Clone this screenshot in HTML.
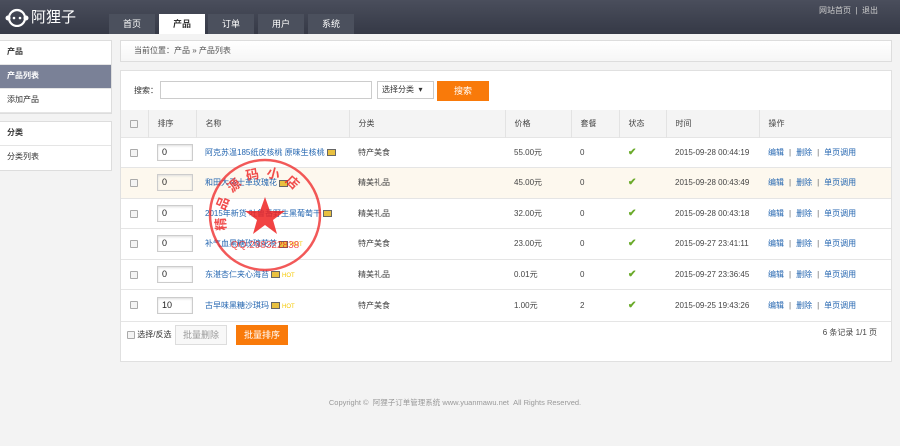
<!DOCTYPE html>
<html><head><meta charset="utf-8"><style>
*{margin:0;padding:0;box-sizing:border-box}
body{width:900px;height:446px;background:#f3f3f3;font-family:"Liberation Sans","Noto Sans CJK SC",sans-serif;font-size:8px;color:#333;position:relative;overflow:hidden}
.hd{position:absolute;left:0;top:0;width:900px;height:34px;background:linear-gradient(#4a4e5c,#353946)}
.logo{position:absolute;left:5px;top:6px;color:#fff;font-size:15px;display:flex;align-items:center;gap:2px}
.tab{position:absolute;top:14px;height:20px;width:46px;background:#4b505d;color:#fff;font-size:9px;text-align:center;line-height:21px}
.tab.on{background:#fff;color:#333;font-weight:bold}
.tr{position:absolute;right:22px;top:5px;color:#ccc;font-size:8px}
.side{position:absolute;left:0;top:40px;width:112px;background:#fff;border:1px solid #ddd;border-left:0}
.side div{height:24px;line-height:22px;padding-left:7px;border-bottom:1px solid #e5e5e5;font-size:8px}
.side .t{font-weight:bold}
.side .a{background:#7a8197;color:#fff;font-weight:bold}
.bc{position:absolute;left:120px;top:40px;width:772px;height:22px;background:linear-gradient(#fff,#f6f6f6);border:1px solid #ddd;line-height:20px;padding-left:13px;color:#555}
.box{position:absolute;left:120px;top:70px;width:772px;height:292px;background:#fff;border:1px solid #e0e0e0}
table{position:absolute;left:0;top:39px;width:770px;border-collapse:collapse}
th{background:#f4f4f4;height:27px;text-align:left;font-weight:normal;padding-left:9px;border-right:1px solid #e3e3e3;color:#444}
td{height:30.5px;border-top:1px solid #e5e5e5;padding-left:9px;color:#444}
tr.y td{background:#fdf8ee}
.cb{display:inline-block;width:8px;height:8px;border:1px solid #aaa;border-radius:1px;background:#f4f4f4;vertical-align:middle}
.in{display:inline-block;width:36px;height:17px;border:1px solid #ccc;padding-left:4px;line-height:15px;font-size:9px;color:#222;box-shadow:inset 0 1px 2px #ddd}
a{color:#2466b0;text-decoration:none}
.ic{display:inline-block;width:9px;height:7px;background:#e8c040;border:1px solid #666;vertical-align:middle;margin-left:2px}
.hot{color:#f5c800;font-size:6px;margin-left:2px}
.ok{color:#6aaa2a;font-weight:bold;font-size:10px}
.sep{color:#666;margin:0 5px}
</style></head><body>
<div class="hd">
 <div class="logo"><svg width="24" height="20" viewBox="0 0 24 20"><circle cx="12" cy="11" r="8" fill="none" stroke="#fff" stroke-width="2.2"/><circle cx="3" cy="11" r="2.5" fill="#fff"/><circle cx="21" cy="11" r="2.5" fill="#fff"/><circle cx="9" cy="11" r="1.3" fill="#fff"/><circle cx="15" cy="11" r="1.3" fill="#fff"/><path d="M7 5 Q12 1 17 5" stroke="#fff" stroke-width="2" fill="none"/></svg><span>阿狸子</span></div>
 <div class="tab" style="left:109px">首页</div>
 <div class="tab on" style="left:159px">产品</div>
 <div class="tab" style="left:208px">订单</div>
 <div class="tab" style="left:258px">用户</div>
 <div class="tab" style="left:308px">系统</div>
 <div class="tr">网站首页 &nbsp;|&nbsp; 退出</div>
</div>
<div class="side">
 <div class="t">产品</div><div class="a">产品列表</div><div>添加产品</div>
</div>
<div class="side" style="top:121px"><div class="t">分类</div><div style="border-bottom:0">分类列表</div></div>
<div class="bc">当前位置：产品 » 产品列表</div>
<div class="box">
 <div style="position:absolute;left:13px;top:14px">搜索：</div>
 <div style="position:absolute;left:39px;top:10px;width:212px;height:18px;border:1px solid #ccc"></div>
 <div style="position:absolute;left:256px;top:10px;width:57px;height:18px;border:1px solid #ccc;line-height:16px;padding-left:4px">选择分类 &nbsp;▾</div>
 <div style="position:absolute;left:316px;top:10px;width:52px;height:20px;background:#f97a0a;color:#fff;text-align:center;line-height:20px;font-size:9px">搜索</div>
 <table>
 <tr><th style="width:27px"><span class="cb"></span></th><th style="width:48px">排序</th><th style="width:153px">名称</th><th style="width:156px">分类</th><th style="width:66px">价格</th><th style="width:48px">套餐</th><th style="width:47px">状态</th><th style="width:93px">时间</th><th style="border-right:0">操作</th></tr>
 <tr><td><span class="cb"></span></td><td><span class="in">0</span></td><td><a>阿克苏温185纸皮核桃 原味生核桃</a><span class="ic"></span></td><td>特产美食</td><td>55.00元</td><td>0</td><td class="ok">✔</td><td>2015-09-28 00:44:19</td><td><a>编辑</a><span class="sep">|</span><a>删除</a><span class="sep">|</span><a>单页调用</a></td></tr>
 <tr class="y"><td><span class="cb"></span></td><td><span class="in">0</span></td><td><a>和田大马士革玫瑰花</a><span class="ic"></span></td><td>精美礼品</td><td>45.00元</td><td>0</td><td class="ok">✔</td><td>2015-09-28 00:43:49</td><td><a>编辑</a><span class="sep">|</span><a>删除</a><span class="sep">|</span><a>单页调用</a></td></tr>
 <tr><td><span class="cb"></span></td><td><span class="in">0</span></td><td><a>2015年新货 吐鲁番野生黑葡萄干</a><span class="ic"></span></td><td>精美礼品</td><td>32.00元</td><td>0</td><td class="ok">✔</td><td>2015-09-28 00:43:18</td><td><a>编辑</a><span class="sep">|</span><a>删除</a><span class="sep">|</span><a>单页调用</a></td></tr>
 <tr><td><span class="cb"></span></td><td><span class="in">0</span></td><td><a>补气血黑糖玫瑰花茶</a><span class="ic"></span><span class="hot">HOT</span></td><td>特产美食</td><td>23.00元</td><td>0</td><td class="ok">✔</td><td>2015-09-27 23:41:11</td><td><a>编辑</a><span class="sep">|</span><a>删除</a><span class="sep">|</span><a>单页调用</a></td></tr>
 <tr><td><span class="cb"></span></td><td><span class="in">0</span></td><td><a>东湛杏仁夹心海苔</a><span class="ic"></span><span class="hot">HOT</span></td><td>精美礼品</td><td>0.01元</td><td>0</td><td class="ok">✔</td><td>2015-09-27 23:36:45</td><td><a>编辑</a><span class="sep">|</span><a>删除</a><span class="sep">|</span><a>单页调用</a></td></tr>
 <tr><td><span class="cb"></span></td><td><span class="in">10</span></td><td><a>古早味黑糖沙琪玛</a><span class="ic"></span><span class="hot">HOT</span></td><td>特产美食</td><td>1.00元</td><td>2</td><td class="ok">✔</td><td>2015-09-25 19:43:26</td><td><a>编辑</a><span class="sep">|</span><a>删除</a><span class="sep">|</span><a>单页调用</a></td></tr>
 </table>
 <div style="position:absolute;left:0;top:250px;width:770px;border-top:1px solid #e5e5e5"></div>
 <div style="position:absolute;left:6px;top:258px"><span class="cb"></span> 选择/反选</div>
 <div style="position:absolute;left:54px;top:254px;width:52px;height:20px;border:1px solid #ddd;background:#f8f8f8;color:#999;text-align:center;line-height:19px;font-size:9px">批量删除</div>
 <div style="position:absolute;left:115px;top:254px;width:52px;height:20px;background:#f97a0a;color:#fff;text-align:center;line-height:20px;font-size:9px">批量排序</div>
 <div style="position:absolute;right:14px;top:256px;color:#444">6 条记录 1/1 页</div>
</div>
<svg style="position:absolute;left:205px;top:155px" width="120" height="120" viewBox="0 0 120 120"><defs><path id="arc" d="M22 75 A40 40 0 1 1 98 75"/></defs><circle cx="60" cy="60" r="55" fill="none" stroke="#e22" stroke-width="2.5" opacity=".75"/><polygon points="60,42 65,56 80,56 68,65 72,79 60,70 48,79 52,65 40,56 55,56" fill="#e22" opacity=".85"/><text fill="#e22" opacity=".8" font-size="13" font-weight="bold" font-family="Noto Sans CJK SC,sans-serif" letter-spacing="6"><textPath href="#arc">精品源码小店</textPath></text><text x="60" y="93" text-anchor="middle" fill="#e22" opacity=".75" font-size="10" font-family="Liberation Sans,sans-serif">QQ:298322838</text></svg>
<div style="position:absolute;left:0;top:397px;width:900px;text-align:center;color:#999;font-size:7.5px;padding-left:10px">Copyright © &nbsp;阿狸子订单管理系统 www.yuanmawu.net &nbsp;All Rights Reserved.</div>
</body></html>
